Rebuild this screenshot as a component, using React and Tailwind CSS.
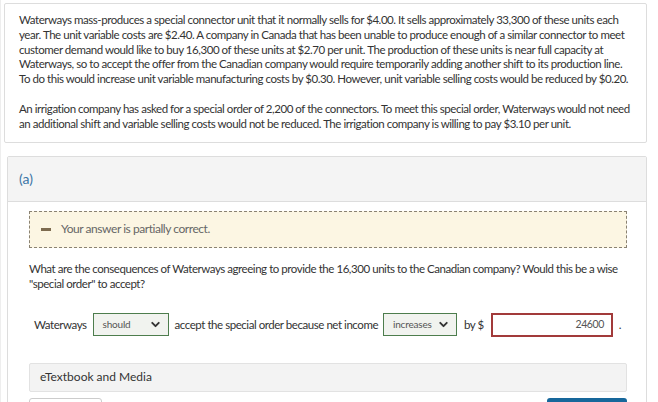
import React from "react";
import { ChevronDown } from "lucide-react";

function Select({ value, width }) {
    return (
        <div className={`flex items-center justify-between h-[23px] border border-[#4d7d4d] bg-[#f1f3ef] pl-[9px] pr-[6px] shrink-0 ${width}`}>
            <span className="text-[10px] text-[#555] tracking-[-0.2px]">{value}</span>
            <ChevronDown size={13} strokeWidth={3.5} className="text-[#333]" />
        </div>
    );
}

const intro = [
    "Waterways mass-produces a special connector unit that it normally sells for $4.00. It sells approximately 33,300 of these units each",
    "year. The unit variable costs are $2.40. A company in Canada that has been unable to produce enough of a similar connector to meet",
    "customer demand would like to buy 16,300 of these units at $2.70 per unit. The production of these units is near full capacity at",
    "Waterways, so to accept the offer from the Canadian company would require temporarily adding another shift to its production line.",
    "To do this would increase unit variable manufacturing costs by $0.30. However, unit variable selling costs would be reduced by $0.20.",
];

const irrigation = [
    "An irrigation company has asked for a special order of 2,200 of the connectors. To meet this special order, Waterways would not need",
    "an additional shift and variable selling costs would not be reduced. The irrigation company is willing to pay $3.10 per unit.",
];

export default function App() {
    return (
        <div className="w-[658px] h-[402px] overflow-hidden bg-white text-[#333] font-['Lato','Open_Sans',sans-serif] border-l border-[#eee]">
            {/* Problem text */}
            <div className="ml-[3px] mt-[3px] w-[643px] border border-[#ddd] rounded-[2px] px-[14px] pt-[9px] pb-[10px] text-[11.5px] leading-[14.8px] tracking-[-0.45px] whitespace-nowrap">
                <div>
                    {intro.map((line) => (
                        <div key={line}>{line}</div>
                    ))}
                </div>
                <div className="mt-[15px]">
                    {irrigation.map((line) => (
                        <div key={line}>{line}</div>
                    ))}
                </div>
            </div>

            {/* Part (a) */}
            <div className="ml-[6px] mt-[13px] w-[640px] border border-[#ddd] rounded-t-[2px]">
                <div className="h-[45px] bg-[#f4f4f4] border-b border-[#ddd] flex items-center px-[11px]">
                    <span className="text-[14px] text-[#3a75a6]">(a)</span>
                </div>
                <div className="pl-[21px] pr-[19px] pt-[9px]">
                    <div className="h-[37px] bg-[#fcf6e3] border border-dashed border-[#8a8272] flex items-center pl-[11px] gap-[10px]">
                        <span className="block w-[10px] h-[3px] bg-[#7d6b4f]"></span>
                        <span className="text-[12px] text-[#666] tracking-[-0.45px]">Your answer is partially correct.</span>
                    </div>

                    <div className="mt-[13px] text-[11.5px] leading-[15px] tracking-[-0.45px] whitespace-nowrap">
                        <div>What are the consequences of Waterways agreeing to provide the 16,300 units to the Canadian company? Would this be a wise</div>
                        <div>"special order" to accept?</div>
                    </div>

                    <div className="mt-[22px] flex items-center pl-[5px] text-[11.5px] tracking-[-0.45px] whitespace-nowrap">
                        <span className="mr-[6px]">Waterways</span>
                        <Select value="should" width="w-[76px]" />
                        <span className="ml-[6px] mr-[5px]">accept the special order because net income</span>
                        <Select value="increases" width="w-[74px]" />
                        <span className="ml-[7px] mr-[7px]">by $</span>
                        <div className="w-[122px] h-[24px] shrink-0 border-2 border-[#a23a3a] flex items-center justify-end pr-[7px] text-[10.5px] text-[#555]">
                            24600
                        </div>
                        <span className="ml-[6px]">.</span>
                    </div>

                    <div className="mt-[26px] h-[29px] bg-[#f3f3f3] border border-[#e2e2e2] rounded-[2px] flex items-center pl-[10px] text-[12px] text-[#333]">
                        eTextbook and Media
                    </div>

                    <div className="mt-[6px] flex justify-between">
                        <div className="w-[73px] h-[20px] border border-[#ccc] rounded-t-[3px] bg-white"></div>
                        <div className="w-[80px] h-[20px] rounded-t-[3px] bg-[#17679b]"></div>
                    </div>
                </div>
            </div>
        </div>
    );
}
